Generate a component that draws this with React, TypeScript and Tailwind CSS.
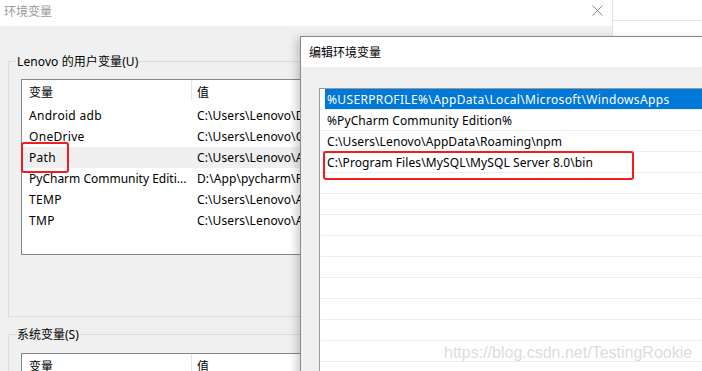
import React from "react";

const FONT = { fontFamily: '"Noto Sans", "Noto Sans CJK SC", sans-serif' };

const userVars: [string, string][] = [
  ["Android adb", "C:\\Users\\Lenovo\\Desktop\\adb"],
  ["OneDrive", "C:\\Users\\Lenovo\\OneDrive"],
  ["Path", "C:\\Users\\Lenovo\\AppData\\Local\\Microsoft\\WindowsApps;"],
  ["PyCharm Community Editi...", "D:\\App\\pycharm\\PyCharm Community Edition\\bin;"],
  ["TEMP", "C:\\Users\\Lenovo\\AppData\\Local\\Temp"],
  ["TMP", "C:\\Users\\Lenovo\\AppData\\Local\\Temp"],
];

const pathRows = [
  "%USERPROFILE%\\AppData\\Local\\Microsoft\\WindowsApps",
  "%PyCharm Community Edition%",
  "C:\\Users\\Lenovo\\AppData\\Roaming\\npm",
  "C:\\Program Files\\MySQL\\MySQL Server 8.0\\bin",
  "", "", "", "", "", "", "", "", "", "",
];

function ListHeader() {
  return (
    <div className="flex h-[25px] items-center text-black tracking-normal">
      <div className="w-[169px] pl-[7px] shrink-0">变量</div>
      <div className="w-px h-[20px] self-start bg-[#e5e5e5] shrink-0" />
      <div className="pl-[5px]">值</div>
    </div>
  );
}

export default function App() {
  return (
    <div className="relative w-[702px] h-[371px] overflow-hidden bg-white text-[12px] leading-[17px] tracking-[0.1px]" style={FONT}>
      <div className="flex h-full">
        {/* background window */}
        <div className="w-[613px] shrink-0 flex flex-col border-r border-[#e3e3e3]">
          <div className="h-[26px] bg-white flex items-center justify-between pl-[4px] pr-[9px] shrink-0">
            <span className="text-[#9a9a9a] -mt-[4px] tracking-normal">环境变量</span>
            <svg width="11" height="11" viewBox="0 0 11 11" className="-mt-[6px]">
              <path d="M0.5 0.5 L10.5 10.5 M10.5 0.5 L0.5 10.5" stroke="#8a8a8a" strokeWidth="1" fill="none" />
            </svg>
          </div>
          <div className="flex-1 bg-[#f0f0f0] pl-[8px] pr-[12px]">
            <fieldset className="mt-[27px] border border-[#dcdcdc] px-[7px] pt-[9px] pb-[61px]">
              <legend className="px-[1px] text-black">Lenovo 的用户变量(U)</legend>
              <div className="ml-[5px] h-[176px] border border-[#828790] bg-white">
                <ListHeader />
                {userVars.map(([n, v]) => (
                  <div key={n} className={`relative flex h-[21px] items-center whitespace-nowrap ${n === "Path" ? "bg-[#efefef]" : ""}`}>
                    <div className={`w-[170px] pl-[7px] shrink-0 overflow-hidden ${n.endsWith("...") ? "tracking-normal" : "tracking-[0.3px]"}`}>{n}</div>
                    <div className="pl-[5px]">{v}</div>
                    {n === "Path" && (
                      <div className="absolute left-[-1px] top-[-5px] w-[48px] h-[31px] border-2 border-[#f21c1c] rounded-[3px]" />
                    )}
                  </div>
                ))}
              </div>
            </fieldset>
            <fieldset className="mt-[9px] border border-[#dcdcdc] px-[7px] pt-[10px] pb-[20px]">
              <legend className="px-[1px] text-black tracking-normal">系统变量(S)</legend>
              <div className="ml-[5px] h-[120px] border border-[#828790] bg-white">
                <ListHeader />
              </div>
            </fieldset>
          </div>
        </div>
        {/* desktop strip */}
        <div className="flex-1 bg-white">
          <div className="mt-[20px] h-px bg-[#e6e6e6]" />
        </div>
      </div>

      {/* edit dialog */}
      <div className="absolute left-[300px] top-[36px] w-[430px] h-[360px] flex flex-col border border-[#8a8a8a] bg-[#f0f0f0] shadow-[-4px_2px_8px_rgba(0,0,0,0.18)]">
        <div className="h-[30px] bg-white flex items-center pl-[8px] shrink-0 text-black tracking-normal">编辑环境变量</div>
        <div className="flex-1 pl-[18px] pt-[21px]">
          <div className="h-full border-l border-t border-[#9a9a9a] bg-white pl-px">
            {pathRows.map((t, i) => (
              <div key={i} className="relative h-[21px] border-b border-[#ececec]">
                <div className={`ml-[4px] h-[20px] pl-[2px] flex items-center whitespace-nowrap ${i === 0 ? "bg-[#0078d7] text-white tracking-[0.35px]" : "text-black"}`}>
                  {t}
                </div>
                {i === 3 && (
                  <div className="absolute left-[2px] top-[-1px] w-[311px] h-[29px] border-2 border-[#f21c1c] rounded-[3px]" />
                )}
              </div>
            ))}
          </div>
        </div>
      </div>

      {/* watermark */}
      <div className="absolute left-[444px] top-[343px] text-[16px] leading-[20px] tracking-normal text-[#dcdcdc]" style={{ fontFamily: '"Liberation Sans", Arial, sans-serif' }}>
        https://blog.csdn.net/TestingRookie
      </div>
    </div>
  );
}
